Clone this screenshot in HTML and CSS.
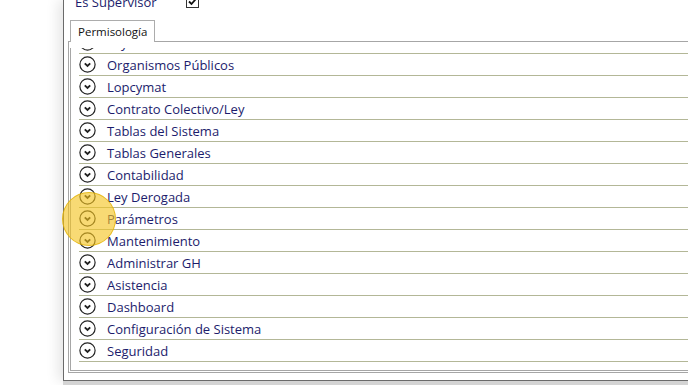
FILE: index.html
```html
<!DOCTYPE html>
<html lang="es">
<head>
    <meta charset="UTF-8">
    <meta name="viewport" content="width=device-width, initial-scale=1.0">
    <title>Permisología</title>
    <link rel="stylesheet" href="styles.css">
</head>
<body>
    <div class="shell">
        <div class="window">
            <div class="field-row">
                <span class="field-label">Es Supervisor</span>
                <svg class="check" width="13" height="13" viewBox="0 0 13 13">
                    <rect x="0.5" y="0.5" width="12" height="12" fill="#fff" stroke="#333"/>
                    <path d="M3 6.5 L5.5 9 L10 3.8" fill="none" stroke="#111" stroke-width="1.8"/>
                </svg>
            </div>

            <div class="tabs">
                <div class="tab">Permisología</div>
            </div>

            <div class="tab-panel">
                <div class="list">
                    <div class="rows" id="rows"></div>
                </div>
            </div>
        </div>
        <div class="under"></div>
    </div>

    <div class="click-marker"></div>

    <script>
        const modules = [
            'Leyes',
            'Organismos Públicos',
            'Lopcymat',
            'Contrato Colectivo/Ley',
            'Tablas del Sistema',
            'Tablas Generales',
            'Contabilidad',
            'Ley Derogada',
            'Parámetros',
            'Mantenimiento',
            'Administrar GH',
            'Asistencia',
            'Dashboard',
            'Configuración de Sistema',
            'Seguridad'
        ];

        const chevron = '<svg class="expander" width="17" height="17" viewBox="0 0 17 17">' +
            '<circle cx="8.5" cy="8.5" r="7.6" fill="none" stroke="#222" stroke-width="1.2"/>' +
            '<path d="M5.8 7.3 L8.5 10 L11.2 7.3" fill="none" stroke="#222" stroke-width="1.9"/>' +
            '</svg>';

        const rows = document.getElementById('rows');
        modules.forEach(function (name) {
            const row = document.createElement('div');
            row.className = 'row';
            row.innerHTML = chevron + '<span class="row-text">' + name + '</span>';
            rows.appendChild(row);
        });
    </script>
</body>
</html>
```

FILE: styles.css
```css
html, body {
    margin: 0;
    padding: 0;
    height: 100%;
    overflow: hidden;
    background-color: #ffffff;
    font-family: "Open Sans", "Noto Sans", sans-serif;
}
.shell {
    margin-left: 63px;
    width: 660px;
}
.window {
    display: flex;
    flex-direction: column;
    height: 381px;
    box-sizing: border-box;
    overflow: hidden;
    background: white;
    border-left: 1px solid #6a6a6a;
    border-bottom: 1px solid #6a6a6a;
    box-shadow: -5px 0 12px rgba(0, 0, 0, 0.10);
}
.under {
    height: 6px;
    background-color: #d4d4d4;
}
.field-row {
    display: flex;
    align-items: flex-start;
    flex: none;
    margin-top: -6px;
    height: 26px;
    padding-left: 11px;
}
.field-label {
    width: 111px;
    font-size: 13px;
    line-height: 16px;
    color: #1c1c6c;
}
.check {
    margin-top: 1px;
}
.tabs {
    display: flex;
    flex: none;
    padding-left: 6px;
}
.tab {
    position: relative;
    z-index: 1;
    width: 85px;
    height: 22px;
    margin-bottom: -1px;
    padding-left: 7px;
    box-sizing: border-box;
    border: 1px solid #acacac;
    border-bottom: none;
    background: white;
    font-size: 11.5px;
    line-height: 21px;
    color: #111;
}
.tab-panel {
    flex: none;
    margin-left: 4px;
    height: 332px;
    box-sizing: border-box;
    padding: 6px 0 1px 1px;
    border: 1px solid #a6a6a6;
    border-right: none;
}
.list {
    height: 323px;
    box-sizing: border-box;
    overflow: hidden;
    border-left: 1px solid #a6a6a6;
    border-bottom: 1px solid #a6a6a6;
}
.rows {
    margin-top: -16px;
    margin-left: 8px;
}
.row {
    display: flex;
    align-items: center;
    height: 22px;
    box-sizing: border-box;
    border-bottom: 1px solid #b3b797;
}
.expander {
    flex: none;
    margin-right: 11px;
}
.row-text {
    font-size: 13px;
    color: #1c1c6c;
    white-space: nowrap;
}
.click-marker {
    position: absolute;
    left: 62px;
    top: 192px;
    width: 52px;
    height: 52px;
    border-radius: 50%;
    background: rgba(244, 196, 30, 0.62);
    border: 1px solid rgba(226, 176, 0, 0.75);
}
```
